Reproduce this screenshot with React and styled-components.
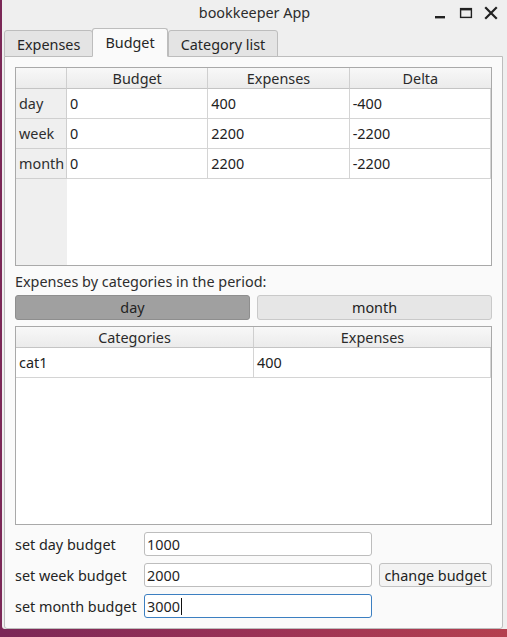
import React from "react";
import styled, { createGlobalStyle } from "styled-components";

const GlobalStyle = createGlobalStyle`
  html, body {
    margin: 0;
    padding: 0;
  }
  body {
    font-family: "Noto Sans", "Open Sans", sans-serif;
    font-size: 14.4px;
    color: #2e2e2e;
  }
`;

// Data
const budgetRows = [
  { period: "day", budget: "0", expenses: "400", delta: "-400" },
  { period: "week", budget: "0", expenses: "2200", delta: "-2200" },
  { period: "month", budget: "0", expenses: "2200", delta: "-2200" },
];

const categoryRows = [{ name: "cat1", expenses: "400" }];

const App = () => {
  return (
    <>
      <GlobalStyle />
      <Desktop>
        <Window>
          <TitleBar>
            <span />
            <Title>bookkeeper App</Title>
            <Controls>
              <svg width="14" height="14" viewBox="0 0 14 14">
                <rect x="1" y="10" width="10" height="2.4" fill="#222" />
              </svg>
              <svg width="14" height="14" viewBox="0 0 14 14">
                <rect x="1.6" y="2.6" width="10.8" height="8.8" fill="none" stroke="#222" strokeWidth="1.4" />
                <rect x="1" y="2" width="12" height="2.4" fill="#222" />
              </svg>
              <svg width="14" height="14" viewBox="0 0 14 14">
                <path d="M2 2 L12 12 M12 2 L2 12" stroke="#222" strokeWidth="2.2" strokeLinecap="square" />
              </svg>
            </Controls>
          </TitleBar>

          <TabBar>
            <Tab>Expenses</Tab>
            <Tab $active>Budget</Tab>
            <Tab>Category list</Tab>
          </TabBar>

          <Pane>
            <BudgetTable>
              <HeadCell />
              <HeadCell>Budget</HeadCell>
              <HeadCell>Expenses</HeadCell>
              <HeadCell $last>Delta</HeadCell>
              {budgetRows.map((row) => (
                <React.Fragment key={row.period}>
                  <RowHead>{row.period}</RowHead>
                  <Cell>{row.budget}</Cell>
                  <Cell>{row.expenses}</Cell>
                  <Cell>{row.delta}</Cell>
                </React.Fragment>
              ))}
              <RowHeadFill />
              <BodyFill />
            </BudgetTable>

            <Caption>Expenses by categories in the period:</Caption>

            <PeriodButtons>
              <PeriodButton $checked>day</PeriodButton>
              <PeriodButton>month</PeriodButton>
            </PeriodButtons>

            <CategoryTable>
              <HeadCell>Categories</HeadCell>
              <HeadCell $last>Expenses</HeadCell>
              {categoryRows.map((row) => (
                <React.Fragment key={row.name}>
                  <Cell>{row.name}</Cell>
                  <Cell>{row.expenses}</Cell>
                </React.Fragment>
              ))}
              <BodyFill $span={2} />
            </CategoryTable>

            <Form>
              <FormLabel>set day budget</FormLabel>
              <Field>1000</Field>
              <span />
              <FormLabel>set week budget</FormLabel>
              <Field>2000</Field>
              <PushButton>change budget</PushButton>
              <FormLabel>set month budget</FormLabel>
              <Field $focused>
                3000
                <Caret />
              </Field>
              <span />
            </Form>
          </Pane>
        </Window>
      </Desktop>
    </>
  );
};

const Desktop = styled.div`
  width: 507px;
  height: 637px;
  overflow: hidden;
  background: linear-gradient(90deg, #7b2857 0%, #9a3256 50%, #b4404f 100%);
  box-sizing: border-box;
  padding-left: 2px;
`;

const Window = styled.div`
  height: 629px;
  background: #efefef;
  border-bottom-left-radius: 3px;
  display: flex;
  flex-direction: column;
`;

const TitleBar = styled.div`
  height: 28px;
  display: grid;
  grid-template-columns: 1fr auto 1fr;
  align-items: center;
`;

const Title = styled.div`
  color: #2c2c2c;
  margin-top: -3px;
`;

const Controls = styled.div`
  display: flex;
  justify-content: flex-end;
  gap: 11px;
  padding-right: 9px;
  margin-top: -2px;
`;

const TabBar = styled.div`
  display: flex;
  align-items: flex-end;
  height: 29px;
  padding-left: 2px;
  position: relative;
  z-index: 1;
`;

const Tab = styled.div`
  box-sizing: border-box;
  height: ${(p) => (p.$active ? "29px" : "27px")};
  padding: 0 12px;
  margin-right: ${(p) => (p.$active ? "0" : "-1px")};
  display: flex;
  align-items: center;
  padding-top: ${(p) => (p.$active ? "0" : "2px")};
  background: ${(p) => (p.$active ? "#fafafa" : "#e4e4e4")};
  border: 1px solid #bdbdbd;
  border-bottom: 1px solid ${(p) => (p.$active ? "#fafafa" : "#bdbdbd")};
  border-radius: 3px 3px 0 0;
  color: #262626;
  position: relative;
  z-index: ${(p) => (p.$active ? 2 : 1)};
`;

const Pane = styled.div`
  margin: -1px 4px 0 2px;
  flex: 1;
  background: #fafafa;
  border: 1px solid #bdbdbd;
  border-radius: 0 0 3px 3px;
  padding: 10px 10px 0 10px;
  display: flex;
  flex-direction: column;
`;

const TableBase = styled.div`
  display: grid;
  border: 1px solid #a9a9a9;
  background: #ffffff;
  box-sizing: border-box;
`;

const BudgetTable = styled(TableBase)`
  height: 199px;
  grid-template-columns: 51px 1fr 1fr 1fr;
  grid-template-rows: 21px 30px 30px 30px 1fr;
`;

const CategoryTable = styled(TableBase)`
  height: 199px;
  margin-top: 6px;
  grid-template-columns: 238px 1fr;
  grid-template-rows: 21px 30px 1fr;
`;

const HeadCell = styled.div`
  background: linear-gradient(#f8f8f8, #ebebeb);
  border-right: ${(p) => (p.$last ? "none" : "1px solid #cfcfcf")};
  border-bottom: 1px solid #c4c4c4;
  display: flex;
  align-items: center;
  justify-content: center;
  color: #2a2a2a;
`;

const RowHead = styled.div`
  background: #efefef;
  border-right: 1px solid #cfcfcf;
  border-bottom: 1px solid #cfcfcf;
  display: flex;
  align-items: center;
  padding-left: 3px;
`;

const RowHeadFill = styled.div`
  background: #efefef;
`;

const Cell = styled.div`
  border-right: 1px solid #d4d4d4;
  border-bottom: 1px solid #d4d4d4;
  display: flex;
  align-items: center;
  padding-left: 3px;
  color: #222;
`;

const BodyFill = styled.div`
  grid-column: span ${(p) => p.$span || 3};
  background: #ffffff;
`;

const Caption = styled.div`
  margin-top: 6px;
  height: 20px;
  line-height: 20px;
`;

const PeriodButtons = styled.div`
  margin-top: 3px;
  display: grid;
  grid-template-columns: 1fr 1fr;
  gap: 7px;
`;

const PeriodButton = styled.div`
  height: 25px;
  box-sizing: border-box;
  border-radius: 3px;
  border: 1px solid ${(p) => (p.$checked ? "#8e8e8e" : "#c9c9c9")};
  background: ${(p) => (p.$checked ? "#a0a0a0" : "#e6e6e6")};
  display: flex;
  align-items: center;
  justify-content: center;
  color: #232323;
`;

const Form = styled.div`
  margin-top: 7px;
  display: grid;
  grid-template-columns: 122px 228px 113px;
  grid-auto-rows: 24px;
  column-gap: 7px;
  row-gap: 7px;
  align-items: center;
`;

const FormLabel = styled.div`
  color: #242424;
  white-space: nowrap;
`;

const Field = styled.div`
  height: 24px;
  box-sizing: border-box;
  border: 1px solid ${(p) => (p.$focused ? "#3c7fc1" : "#bdbdbd")};
  border-radius: 3px;
  background: #ffffff;
  display: flex;
  align-items: center;
  padding-left: 2px;
  color: #1f1f1f;
`;

const Caret = styled.span`
  display: inline-block;
  width: 1px;
  height: 17px;
  background: #111;
  margin-left: 1px;
`;

const PushButton = styled.div`
  height: 24px;
  box-sizing: border-box;
  border: 1px solid #c2c2c2;
  border-radius: 3px;
  background: #f3f3f3;
  display: flex;
  align-items: center;
  justify-content: center;
  color: #222;
`;

export default App;
